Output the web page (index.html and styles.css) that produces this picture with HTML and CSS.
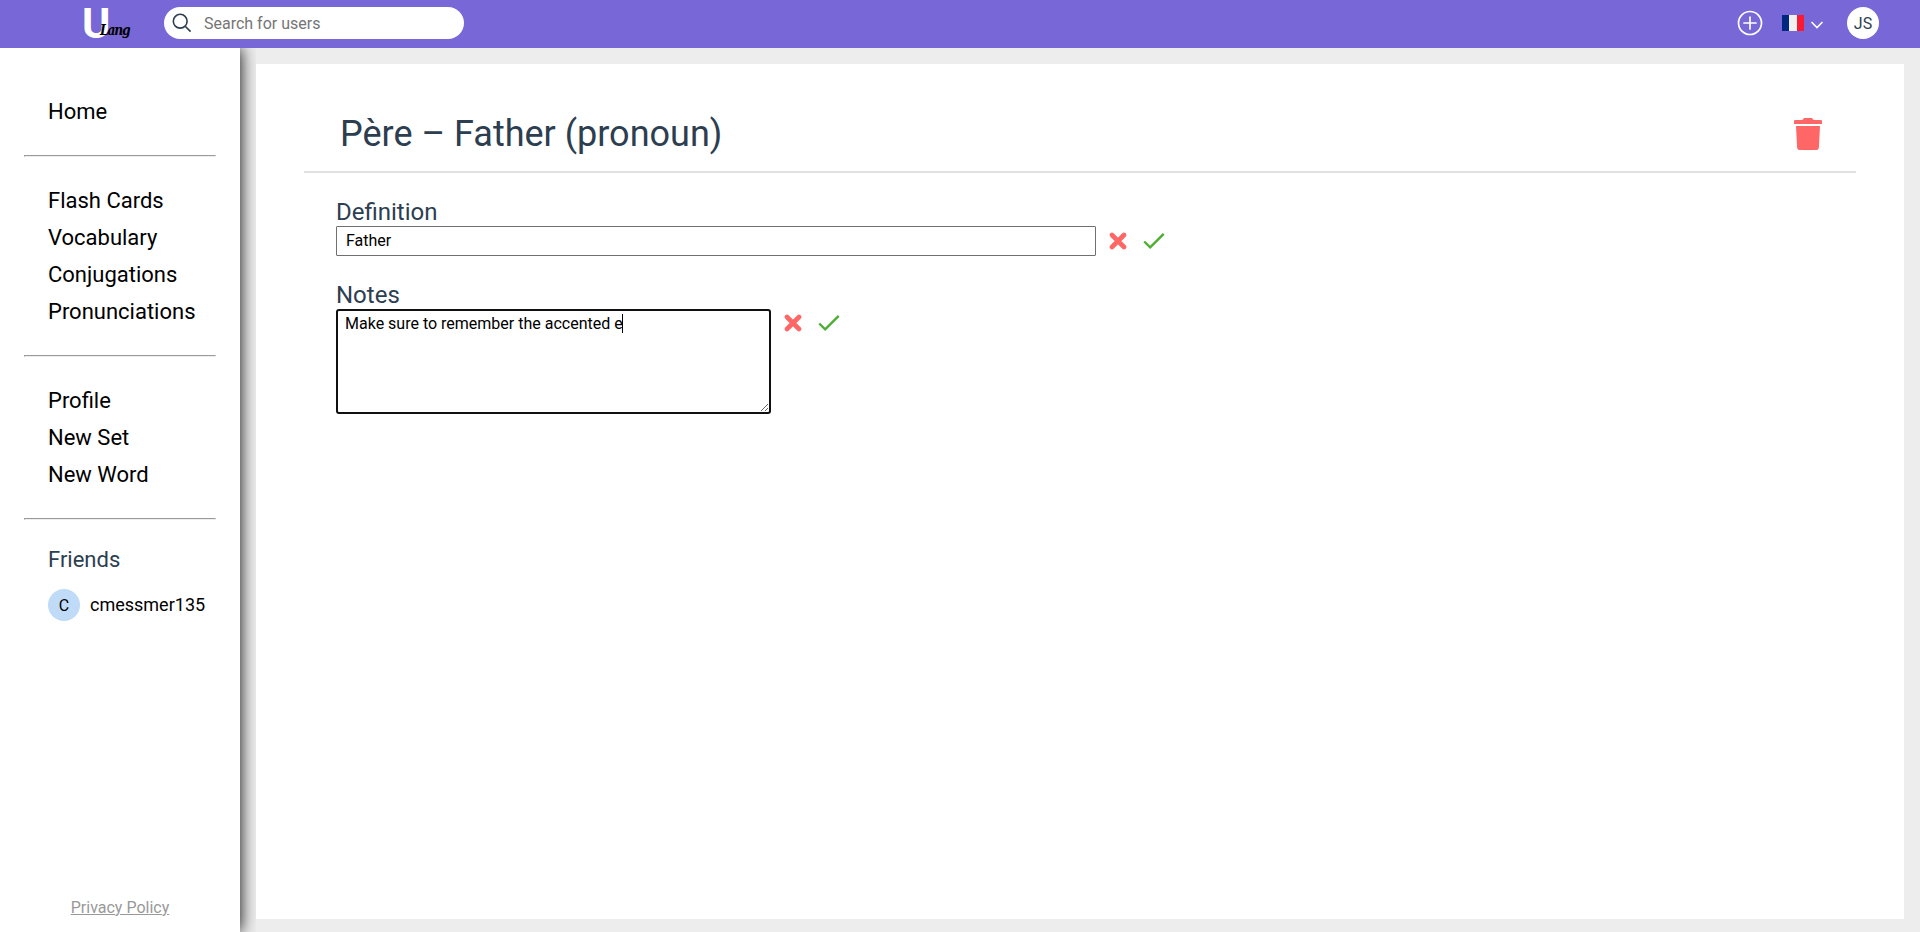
FILE: index.html
```html
<!DOCTYPE html>
<html lang="en">
<head>
<meta charset="utf-8">
<title>ULang</title>
<link rel="stylesheet" href="styles.css">
</head>
<body>
<header class="topbar">
  <a class="logo"><span class="logo-u">U</span><span class="logo-lang">Lang</span></a>
  <label class="search">
    <svg class="search-icon" viewBox="0 0 20 20" width="20" height="20"><circle cx="8.2" cy="8.2" r="6.9"/><path d="M13.2 13.2L18.6 18.6"/></svg>
    <input class="search-input" type="text" placeholder="Search for users">
  </label>
  <div class="actions">
    <svg class="add-icon" viewBox="0 0 26 26" width="26" height="26"><circle cx="13" cy="13" r="11.5"/><path d="M13 7V19M7 13H19"/></svg>
    <div class="language">
      <span class="flag"><i class="flag-blue"></i><i class="flag-white"></i><i class="flag-red"></i></span>
      <svg class="chevron" viewBox="0 0 14 8" width="14" height="8"><path d="M1.5 1L7 6.5L12.5 1"/></svg>
    </div>
    <span class="avatar avatar-me">JS</span>
  </div>
</header>
<div class="layout">
  <aside class="sidebar">
    <nav class="group"><a>Home</a></nav>
    <hr class="rule">
    <nav class="group"><a>Flash Cards</a><a>Vocabulary</a><a>Conjugations</a><a>Pronunciations</a></nav>
    <hr class="rule">
    <nav class="group"><a>Profile</a><a>New Set</a><a>New Word</a></nav>
    <hr class="rule">
    <div class="friends">
      <h2 class="friends-title">Friends</h2>
      <a class="friend"><span class="avatar avatar-friend">C</span><span class="friend-name">cmessmer135</span></a>
    </div>
    <a class="privacy">Privacy Policy</a>
  </aside>
  <main class="card">
    <div class="card-head">
      <h1 class="title">Père – Father (pronoun)</h1>
      <svg class="trash" viewBox="0 0 28 32" width="28" height="32"><path d="M1.2 2H8.5L9.3.8Q9.8 0 10.8 0H17.2Q18.2 0 18.7.8L19.5 2H26.8Q28 2 28 3.2V6H0V3.2Q0 2 1.2 2ZM2 8H26L24.9 29.2Q24.7 32 22 32H6Q3.300 32 3.100 29.2Z"/></svg>
    </div>
    <section class="field">
      <h2 class="label">Definition</h2>
      <div class="row">
        <input class="definition" type="text" value="Father">
        <svg class="cross" viewBox="0 0 18 18" width="18" height="18"><path d="M3 3L15 15M15 3L3 15"/></svg>
        <svg class="check" viewBox="0 0 22 18" width="22" height="18"><path d="M1.200 9.500L7.200 15.300L20.700 1.800"/></svg>
      </div>
    </section>
    <section class="field">
      <h2 class="label">Notes</h2>
      <div class="row row-notes">
        <div class="notes-box"><textarea class="notes" spellcheck="false">Make sure to remember the accented e</textarea><span class="caret"></span></div>
        <svg class="cross" viewBox="0 0 18 18" width="18" height="18"><path d="M3 3L15 15M15 3L3 15"/></svg>
        <svg class="check" viewBox="0 0 22 18" width="22" height="18"><path d="M1.200 9.500L7.200 15.300L20.700 1.800"/></svg>
      </div>
    </section>
  </main>
</div>
</body>
</html>
```
FILE: styles.css
```css
* { box-sizing: border-box; }
body { margin: 0; height: 932px; overflow: hidden; background: #ededed; color: #2c3e50; font-family: Roboto, sans-serif; font-size: 16px; }
h1, h2 { margin: 0; font-weight: 400; }
.topbar { height: 48px; background: #7867d7; display: flex; align-items: center; padding: 0 41px 2px 82px; }
.logo { position: relative; width: 50px; height: 34px; margin-right: 32px; }
.logo-u { display: block; color: #fff; font: 700 43px/34px Roboto, sans-serif; }
.logo-lang { position: absolute; left: 18px; top: 15px; color: #000; font: italic bold 15px/18px "DejaVu Serif", serif; letter-spacing: -1.4px; transform: scaleX(.82); transform-origin: left; }
.search { display: flex; align-items: center; width: 300px; height: 32px; border-radius: 16px; background: #fff; padding-left: 8px; }
.search-icon { fill: none; stroke: #2c3e50; stroke-width: 1.6; margin-right: 12px; }
.search-input { flex: 1; min-width: 0; border: 0; padding: 0; outline: 0; background: none; font: 16px Roboto, sans-serif; margin-right: 16px; }
.search-input::placeholder { color: #757575; opacity: 1; }
.actions { margin-left: auto; display: flex; align-items: center; }
.add-icon { fill: none; stroke: #fff; stroke-width: 1.7; stroke-linecap: round; margin-right: 19px; }
.language { display: flex; align-items: center; gap: 6px; margin-right: 23px; }
.flag { display: flex; width: 22px; height: 16px; }
.flag i { flex: 1; }
.flag-blue { background: #00267f; }
.flag-white { background: #f0f0f0; }
.flag-red { background: #f91933; }
.chevron { fill: none; stroke: #fff; stroke-width: 1.6; margin-top: 3px; }
.avatar { width: 32px; height: 32px; border-radius: 50%; display: flex; align-items: center; justify-content: center; flex: none; }
.avatar-me { background: #fff; }
.avatar-friend { background: #bfdbf7; color: #000; }
.layout { display: flex; height: 884px; }
.sidebar { width: 240px; background: #fff; display: flex; flex-direction: column; padding: 45px 24px 13px; box-shadow: 0 0 16px #000; clip-path: inset(0 -16px 0 0); }
.group { display: flex; flex-direction: column; padding-left: 24px; color: #000; font-size: 22px; line-height: 37px; }
.rule { width: 192px; margin: 25px 0 25px; height: 2px; border: 1px inset #eee; }
.friends { padding-left: 24px; }
.friends-title { font-size: 22px; line-height: 30px; }
.friend { display: flex; align-items: center; gap: 10px; margin-top: 14px; color: #000; font-size: 18px; }
.friend .avatar { font-size: 16px; }
.friend-name { padding-bottom: 2px; }
.privacy { margin-top: auto; align-self: center; color: #999; text-decoration: underline; line-height: 22px; }
.card { flex: 1; margin: 16px 16px 13px; background: #fff; padding: 40px 48px; }
.card-head { height: 69px; border-bottom: 2px solid #e0e0e0; display: flex; justify-content: space-between; padding: 7px 34px 0 36px; }
.title { font-size: 36px; line-height: 46px; }
.trash { fill: #ff6666; margin-top: 7px; }
.field { padding-left: 32px; margin-top: 25px; }
.label { font-size: 24px; line-height: 28px; }
.row { display: flex; align-items: center; }
.row-notes { align-items: flex-start; }
.definition { width: 760px; height: 30px; border: 1px solid #707070; border-radius: 1px; padding: 0 9px 2px; font: 16px Roboto, sans-serif; color: #000; }
.cross { fill: none; stroke: #ff6666; stroke-width: 4.6; stroke-linecap: round; margin-left: 13px; }
.check { fill: none; stroke: #4caf32; stroke-width: 2.4; margin-left: 16px; }
.row-notes svg { margin-top: 5px; }
.notes-box { position: relative; display: flex; }
.notes { width: 435px; height: 105px; border: 2px solid #101010; border-radius: 3px; outline: 0; padding: 3px 7px; font: 16px/19px Roboto, sans-serif; color: #000; }
.caret { position: absolute; left: 286px; top: 5px; width: 1px; height: 19px; background: #000; }
```
